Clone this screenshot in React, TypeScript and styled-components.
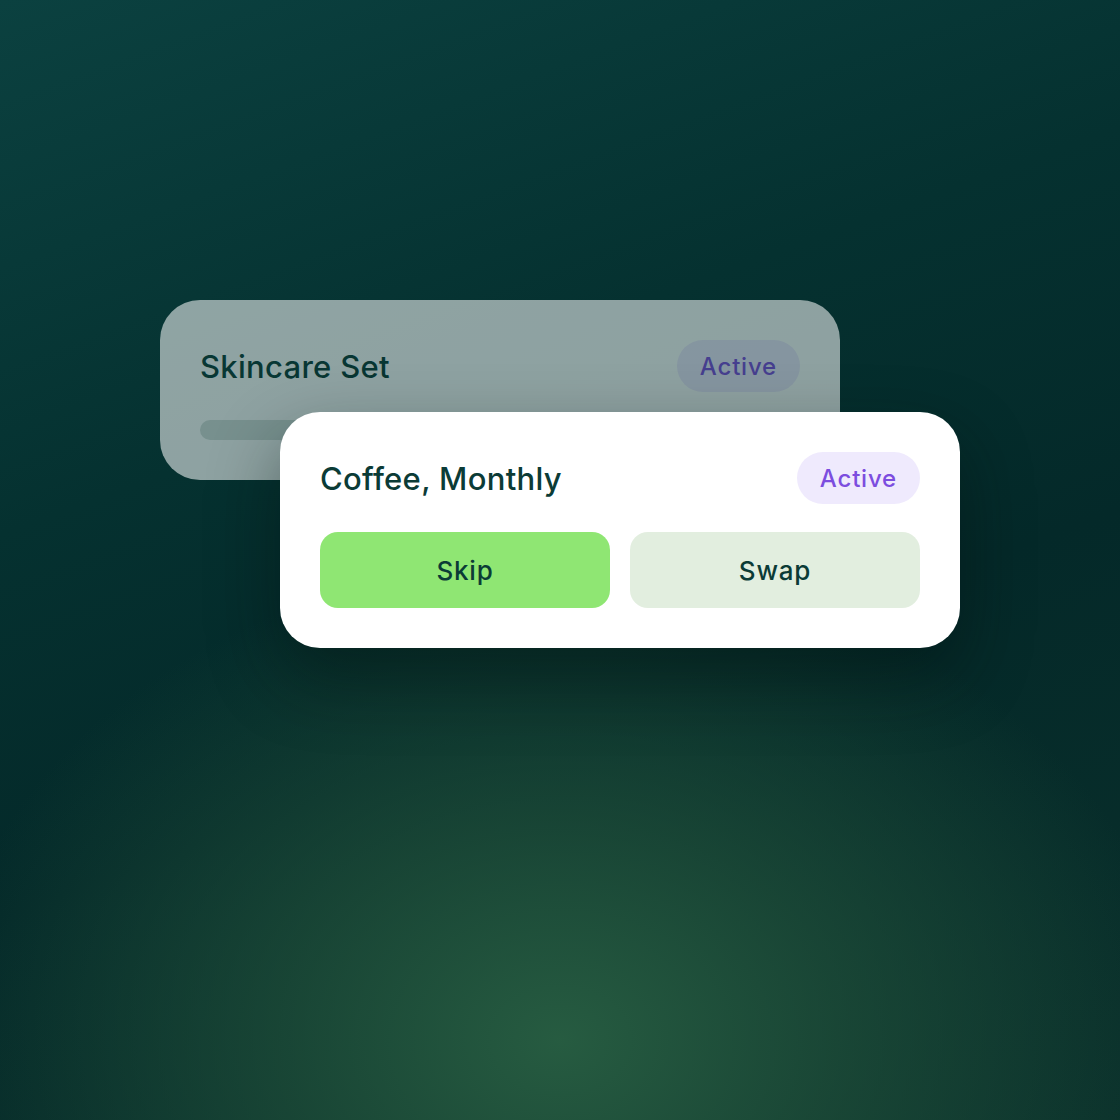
import React from "react"
import styled, { createGlobalStyle } from "styled-components"

const GlobalStyle = createGlobalStyle`
  html, body {
    margin: 0;
    padding: 0;
  }
  body {
    font-family: Inter, "Noto Sans", sans-serif;
  }
`

const Page = styled.div`
  width: 1120px;
  height: 1120px;
  box-sizing: border-box;
  padding-top: 300px;
  display: flex;
  justify-content: center;
  align-items: flex-start;
  background:
    radial-gradient(ellipse 620px 480px at 560px 1040px, rgba(40, 94, 66, 0.95) 0%, rgba(32, 80, 58, 0.7) 45%, rgba(20, 60, 50, 0) 100%),
    linear-gradient(160deg, #0b4140 0%, #053130 35%, #042929 60%, #0a302b 100%);
  overflow: hidden;
`

const Stack = styled.div`
  display: grid;
  grid-template-areas: "stack";
  width: 800px;
  height: 348px;
`

const Card = styled.div<{ $back?: boolean }>`
  grid-area: stack;
  justify-self: ${(p) => (p.$back ? "start" : "end")};
  align-self: ${(p) => (p.$back ? "start" : "end")};
  z-index: ${(p) => (p.$back ? 0 : 1)};
  width: 680px;
  box-sizing: border-box;
  padding: 40px;
  border-radius: 40px;
  background: #ffffff;
  opacity: ${(p) => (p.$back ? 0.55 : 1)};
  box-shadow: ${(p) => (p.$back ? "none" : "0 30px 70px rgba(0, 18, 16, 0.45)")};
  display: flex;
  flex-direction: column;
  gap: 28px;
`

const Header = styled.div`
  display: flex;
  justify-content: space-between;
  align-items: center;
`

const Title = styled.div`
  font-size: 31px;
  font-weight: 500;
  color: #0b3b36;
  letter-spacing: 0.3px;
`

const Badge = styled.span`
  display: inline-flex;
  align-items: center;
  justify-content: center;
  height: 52px;
  padding: 0 23px;
  border-radius: 26px;
  background: #efeafd;
  color: #7c4ddf;
  font-size: 24px;
  font-weight: 500;
  letter-spacing: 0.8px;
`

const Bar = styled.div`
  height: 20px;
  border-radius: 10px;
  background: #d5dedb;
`

const Actions = styled.div`
  display: grid;
  grid-template-columns: 1fr 1fr;
  gap: 20px;
`

const Action = styled.button<{ $primary?: boolean }>`
  height: 76px;
  border: none;
  border-radius: 18px;
  background: ${(p) => (p.$primary ? "#8fe673" : "#e2eedf")};
  color: #0b3b36;
  font-family: Inter, "Noto Sans", sans-serif;
  font-size: 26px;
  font-weight: 500;
  letter-spacing: 0.8px;
  cursor: pointer;
`

export default function App() {
  return (
    <>
      <GlobalStyle />
      <Page>
        <Stack>
          <Card $back>
            <Header>
              <Title>Skincare Set</Title>
              <Badge>Active</Badge>
            </Header>
            <Bar />
          </Card>
          <Card>
            <Header>
              <Title>Coffee, Monthly</Title>
              <Badge>Active</Badge>
            </Header>
            <Actions>
              <Action $primary>Skip</Action>
              <Action>Swap</Action>
            </Actions>
          </Card>
        </Stack>
      </Page>
    </>
  )
}
